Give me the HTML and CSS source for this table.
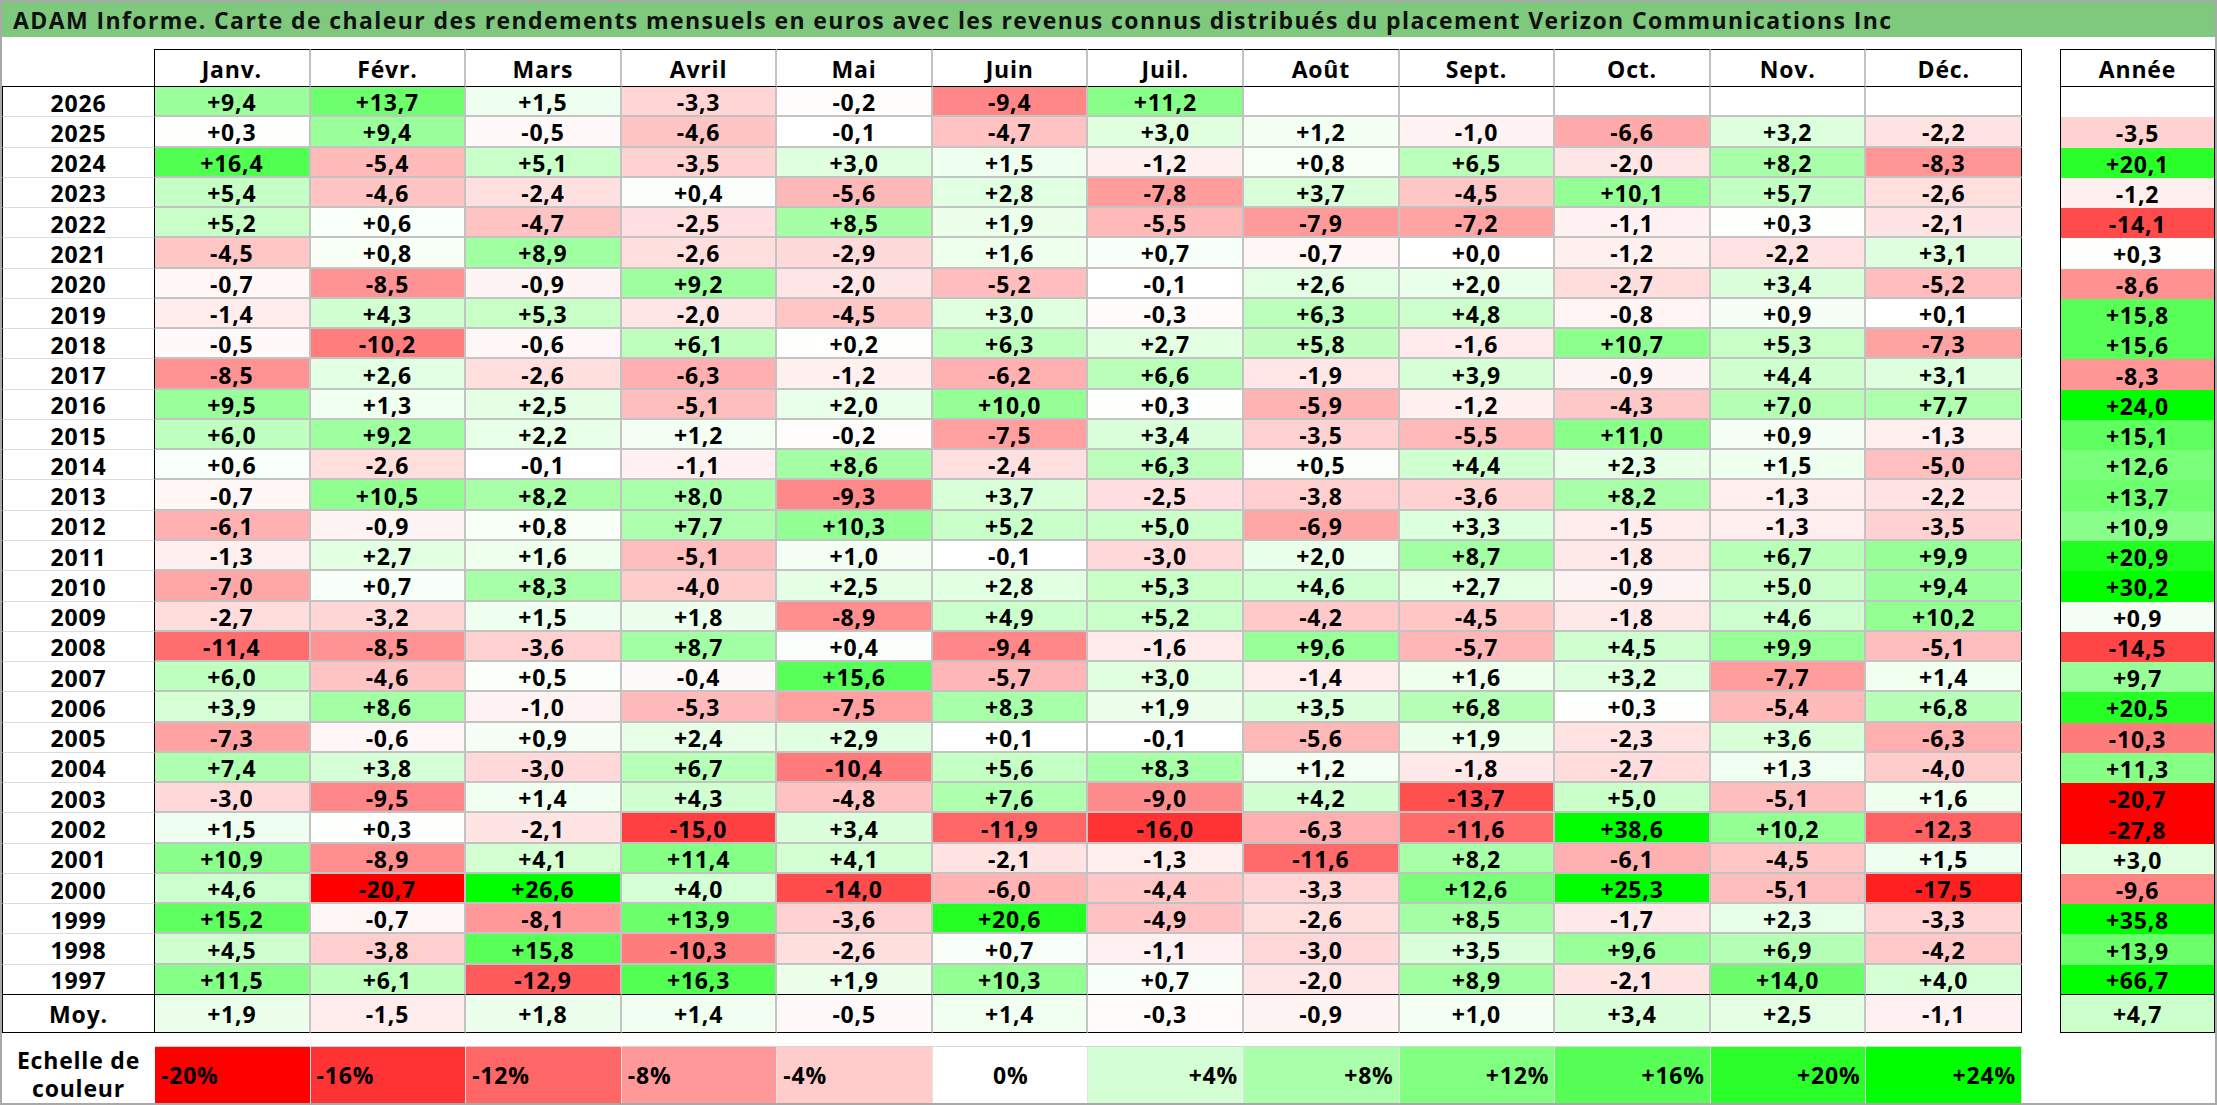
FILE: index.html
```html
<!DOCTYPE html>
<html lang="fr">
<head>
<meta charset="utf-8">
<title>Carte de chaleur Verizon</title>
<link rel="stylesheet" href="styles.css">
</head>
<body>
<div class="page">
  <div class="title">ADAM Informe. Carte de chaleur des rendements mensuels en euros avec les revenus connus distribués du placement Verizon Communications Inc</div>
  <div class="main">
    <div class="tables">
      <div class="heat">
        <div class="row head"><div class="cell corner"></div><div class="cell mh">Janv.</div><div class="cell mh">Févr.</div><div class="cell mh">Mars</div><div class="cell mh">Avril</div><div class="cell mh">Mai</div><div class="cell mh">Juin</div><div class="cell mh">Juil.</div><div class="cell mh">Août</div><div class="cell mh">Sept.</div><div class="cell mh">Oct.</div><div class="cell mh">Nov.</div><div class="cell mh">Déc.</div></div>
        <div class="row"><div class="cell yr">2026</div><div class="cell v">+9,4</div><div class="cell v">+13,7</div><div class="cell v">+1,5</div><div class="cell v">-3,3</div><div class="cell v">-0,2</div><div class="cell v">-9,4</div><div class="cell v">+11,2</div><div class="cell v"></div><div class="cell v"></div><div class="cell v"></div><div class="cell v"></div><div class="cell v"></div></div>
        <div class="row"><div class="cell yr">2025</div><div class="cell v">+0,3</div><div class="cell v">+9,4</div><div class="cell v">-0,5</div><div class="cell v">-4,6</div><div class="cell v">-0,1</div><div class="cell v">-4,7</div><div class="cell v">+3,0</div><div class="cell v">+1,2</div><div class="cell v">-1,0</div><div class="cell v">-6,6</div><div class="cell v">+3,2</div><div class="cell v">-2,2</div></div>
        <div class="row"><div class="cell yr">2024</div><div class="cell v">+16,4</div><div class="cell v">-5,4</div><div class="cell v">+5,1</div><div class="cell v">-3,5</div><div class="cell v">+3,0</div><div class="cell v">+1,5</div><div class="cell v">-1,2</div><div class="cell v">+0,8</div><div class="cell v">+6,5</div><div class="cell v">-2,0</div><div class="cell v">+8,2</div><div class="cell v">-8,3</div></div>
        <div class="row"><div class="cell yr">2023</div><div class="cell v">+5,4</div><div class="cell v">-4,6</div><div class="cell v">-2,4</div><div class="cell v">+0,4</div><div class="cell v">-5,6</div><div class="cell v">+2,8</div><div class="cell v">-7,8</div><div class="cell v">+3,7</div><div class="cell v">-4,5</div><div class="cell v">+10,1</div><div class="cell v">+5,7</div><div class="cell v">-2,6</div></div>
        <div class="row"><div class="cell yr">2022</div><div class="cell v">+5,2</div><div class="cell v">+0,6</div><div class="cell v">-4,7</div><div class="cell v">-2,5</div><div class="cell v">+8,5</div><div class="cell v">+1,9</div><div class="cell v">-5,5</div><div class="cell v">-7,9</div><div class="cell v">-7,2</div><div class="cell v">-1,1</div><div class="cell v">+0,3</div><div class="cell v">-2,1</div></div>
        <div class="row"><div class="cell yr">2021</div><div class="cell v">-4,5</div><div class="cell v">+0,8</div><div class="cell v">+8,9</div><div class="cell v">-2,6</div><div class="cell v">-2,9</div><div class="cell v">+1,6</div><div class="cell v">+0,7</div><div class="cell v">-0,7</div><div class="cell v">+0,0</div><div class="cell v">-1,2</div><div class="cell v">-2,2</div><div class="cell v">+3,1</div></div>
        <div class="row"><div class="cell yr">2020</div><div class="cell v">-0,7</div><div class="cell v">-8,5</div><div class="cell v">-0,9</div><div class="cell v">+9,2</div><div class="cell v">-2,0</div><div class="cell v">-5,2</div><div class="cell v">-0,1</div><div class="cell v">+2,6</div><div class="cell v">+2,0</div><div class="cell v">-2,7</div><div class="cell v">+3,4</div><div class="cell v">-5,2</div></div>
        <div class="row"><div class="cell yr">2019</div><div class="cell v">-1,4</div><div class="cell v">+4,3</div><div class="cell v">+5,3</div><div class="cell v">-2,0</div><div class="cell v">-4,5</div><div class="cell v">+3,0</div><div class="cell v">-0,3</div><div class="cell v">+6,3</div><div class="cell v">+4,8</div><div class="cell v">-0,8</div><div class="cell v">+0,9</div><div class="cell v">+0,1</div></div>
        <div class="row"><div class="cell yr">2018</div><div class="cell v">-0,5</div><div class="cell v">-10,2</div><div class="cell v">-0,6</div><div class="cell v">+6,1</div><div class="cell v">+0,2</div><div class="cell v">+6,3</div><div class="cell v">+2,7</div><div class="cell v">+5,8</div><div class="cell v">-1,6</div><div class="cell v">+10,7</div><div class="cell v">+5,3</div><div class="cell v">-7,3</div></div>
        <div class="row"><div class="cell yr">2017</div><div class="cell v">-8,5</div><div class="cell v">+2,6</div><div class="cell v">-2,6</div><div class="cell v">-6,3</div><div class="cell v">-1,2</div><div class="cell v">-6,2</div><div class="cell v">+6,6</div><div class="cell v">-1,9</div><div class="cell v">+3,9</div><div class="cell v">-0,9</div><div class="cell v">+4,4</div><div class="cell v">+3,1</div></div>
        <div class="row"><div class="cell yr">2016</div><div class="cell v">+9,5</div><div class="cell v">+1,3</div><div class="cell v">+2,5</div><div class="cell v">-5,1</div><div class="cell v">+2,0</div><div class="cell v">+10,0</div><div class="cell v">+0,3</div><div class="cell v">-5,9</div><div class="cell v">-1,2</div><div class="cell v">-4,3</div><div class="cell v">+7,0</div><div class="cell v">+7,7</div></div>
        <div class="row"><div class="cell yr">2015</div><div class="cell v">+6,0</div><div class="cell v">+9,2</div><div class="cell v">+2,2</div><div class="cell v">+1,2</div><div class="cell v">-0,2</div><div class="cell v">-7,5</div><div class="cell v">+3,4</div><div class="cell v">-3,5</div><div class="cell v">-5,5</div><div class="cell v">+11,0</div><div class="cell v">+0,9</div><div class="cell v">-1,3</div></div>
        <div class="row"><div class="cell yr">2014</div><div class="cell v">+0,6</div><div class="cell v">-2,6</div><div class="cell v">-0,1</div><div class="cell v">-1,1</div><div class="cell v">+8,6</div><div class="cell v">-2,4</div><div class="cell v">+6,3</div><div class="cell v">+0,5</div><div class="cell v">+4,4</div><div class="cell v">+2,3</div><div class="cell v">+1,5</div><div class="cell v">-5,0</div></div>
        <div class="row"><div class="cell yr">2013</div><div class="cell v">-0,7</div><div class="cell v">+10,5</div><div class="cell v">+8,2</div><div class="cell v">+8,0</div><div class="cell v">-9,3</div><div class="cell v">+3,7</div><div class="cell v">-2,5</div><div class="cell v">-3,8</div><div class="cell v">-3,6</div><div class="cell v">+8,2</div><div class="cell v">-1,3</div><div class="cell v">-2,2</div></div>
        <div class="row"><div class="cell yr">2012</div><div class="cell v">-6,1</div><div class="cell v">-0,9</div><div class="cell v">+0,8</div><div class="cell v">+7,7</div><div class="cell v">+10,3</div><div class="cell v">+5,2</div><div class="cell v">+5,0</div><div class="cell v">-6,9</div><div class="cell v">+3,3</div><div class="cell v">-1,5</div><div class="cell v">-1,3</div><div class="cell v">-3,5</div></div>
        <div class="row"><div class="cell yr">2011</div><div class="cell v">-1,3</div><div class="cell v">+2,7</div><div class="cell v">+1,6</div><div class="cell v">-5,1</div><div class="cell v">+1,0</div><div class="cell v">-0,1</div><div class="cell v">-3,0</div><div class="cell v">+2,0</div><div class="cell v">+8,7</div><div class="cell v">-1,8</div><div class="cell v">+6,7</div><div class="cell v">+9,9</div></div>
        <div class="row"><div class="cell yr">2010</div><div class="cell v">-7,0</div><div class="cell v">+0,7</div><div class="cell v">+8,3</div><div class="cell v">-4,0</div><div class="cell v">+2,5</div><div class="cell v">+2,8</div><div class="cell v">+5,3</div><div class="cell v">+4,6</div><div class="cell v">+2,7</div><div class="cell v">-0,9</div><div class="cell v">+5,0</div><div class="cell v">+9,4</div></div>
        <div class="row"><div class="cell yr">2009</div><div class="cell v">-2,7</div><div class="cell v">-3,2</div><div class="cell v">+1,5</div><div class="cell v">+1,8</div><div class="cell v">-8,9</div><div class="cell v">+4,9</div><div class="cell v">+5,2</div><div class="cell v">-4,2</div><div class="cell v">-4,5</div><div class="cell v">-1,8</div><div class="cell v">+4,6</div><div class="cell v">+10,2</div></div>
        <div class="row"><div class="cell yr">2008</div><div class="cell v">-11,4</div><div class="cell v">-8,5</div><div class="cell v">-3,6</div><div class="cell v">+8,7</div><div class="cell v">+0,4</div><div class="cell v">-9,4</div><div class="cell v">-1,6</div><div class="cell v">+9,6</div><div class="cell v">-5,7</div><div class="cell v">+4,5</div><div class="cell v">+9,9</div><div class="cell v">-5,1</div></div>
        <div class="row"><div class="cell yr">2007</div><div class="cell v">+6,0</div><div class="cell v">-4,6</div><div class="cell v">+0,5</div><div class="cell v">-0,4</div><div class="cell v">+15,6</div><div class="cell v">-5,7</div><div class="cell v">+3,0</div><div class="cell v">-1,4</div><div class="cell v">+1,6</div><div class="cell v">+3,2</div><div class="cell v">-7,7</div><div class="cell v">+1,4</div></div>
        <div class="row"><div class="cell yr">2006</div><div class="cell v">+3,9</div><div class="cell v">+8,6</div><div class="cell v">-1,0</div><div class="cell v">-5,3</div><div class="cell v">-7,5</div><div class="cell v">+8,3</div><div class="cell v">+1,9</div><div class="cell v">+3,5</div><div class="cell v">+6,8</div><div class="cell v">+0,3</div><div class="cell v">-5,4</div><div class="cell v">+6,8</div></div>
        <div class="row"><div class="cell yr">2005</div><div class="cell v">-7,3</div><div class="cell v">-0,6</div><div class="cell v">+0,9</div><div class="cell v">+2,4</div><div class="cell v">+2,9</div><div class="cell v">+0,1</div><div class="cell v">-0,1</div><div class="cell v">-5,6</div><div class="cell v">+1,9</div><div class="cell v">-2,3</div><div class="cell v">+3,6</div><div class="cell v">-6,3</div></div>
        <div class="row"><div class="cell yr">2004</div><div class="cell v">+7,4</div><div class="cell v">+3,8</div><div class="cell v">-3,0</div><div class="cell v">+6,7</div><div class="cell v">-10,4</div><div class="cell v">+5,6</div><div class="cell v">+8,3</div><div class="cell v">+1,2</div><div class="cell v">-1,8</div><div class="cell v">-2,7</div><div class="cell v">+1,3</div><div class="cell v">-4,0</div></div>
        <div class="row"><div class="cell yr">2003</div><div class="cell v">-3,0</div><div class="cell v">-9,5</div><div class="cell v">+1,4</div><div class="cell v">+4,3</div><div class="cell v">-4,8</div><div class="cell v">+7,6</div><div class="cell v">-9,0</div><div class="cell v">+4,2</div><div class="cell v">-13,7</div><div class="cell v">+5,0</div><div class="cell v">-5,1</div><div class="cell v">+1,6</div></div>
        <div class="row"><div class="cell yr">2002</div><div class="cell v">+1,5</div><div class="cell v">+0,3</div><div class="cell v">-2,1</div><div class="cell v">-15,0</div><div class="cell v">+3,4</div><div class="cell v">-11,9</div><div class="cell v">-16,0</div><div class="cell v">-6,3</div><div class="cell v">-11,6</div><div class="cell v">+38,6</div><div class="cell v">+10,2</div><div class="cell v">-12,3</div></div>
        <div class="row"><div class="cell yr">2001</div><div class="cell v">+10,9</div><div class="cell v">-8,9</div><div class="cell v">+4,1</div><div class="cell v">+11,4</div><div class="cell v">+4,1</div><div class="cell v">-2,1</div><div class="cell v">-1,3</div><div class="cell v">-11,6</div><div class="cell v">+8,2</div><div class="cell v">-6,1</div><div class="cell v">-4,5</div><div class="cell v">+1,5</div></div>
        <div class="row"><div class="cell yr">2000</div><div class="cell v">+4,6</div><div class="cell v">-20,7</div><div class="cell v">+26,6</div><div class="cell v">+4,0</div><div class="cell v">-14,0</div><div class="cell v">-6,0</div><div class="cell v">-4,4</div><div class="cell v">-3,3</div><div class="cell v">+12,6</div><div class="cell v">+25,3</div><div class="cell v">-5,1</div><div class="cell v">-17,5</div></div>
        <div class="row"><div class="cell yr">1999</div><div class="cell v">+15,2</div><div class="cell v">-0,7</div><div class="cell v">-8,1</div><div class="cell v">+13,9</div><div class="cell v">-3,6</div><div class="cell v">+20,6</div><div class="cell v">-4,9</div><div class="cell v">-2,6</div><div class="cell v">+8,5</div><div class="cell v">-1,7</div><div class="cell v">+2,3</div><div class="cell v">-3,3</div></div>
        <div class="row"><div class="cell yr">1998</div><div class="cell v">+4,5</div><div class="cell v">-3,8</div><div class="cell v">+15,8</div><div class="cell v">-10,3</div><div class="cell v">-2,6</div><div class="cell v">+0,7</div><div class="cell v">-1,1</div><div class="cell v">-3,0</div><div class="cell v">+3,5</div><div class="cell v">+9,6</div><div class="cell v">+6,9</div><div class="cell v">-4,2</div></div>
        <div class="row last"><div class="cell yr">1997</div><div class="cell v">+11,5</div><div class="cell v">+6,1</div><div class="cell v">-12,9</div><div class="cell v">+16,3</div><div class="cell v">+1,9</div><div class="cell v">+10,3</div><div class="cell v">+0,7</div><div class="cell v">-2,0</div><div class="cell v">+8,9</div><div class="cell v">-2,1</div><div class="cell v">+14,0</div><div class="cell v">+4,0</div></div>
        <div class="row moy"><div class="cell yr">Moy.</div><div class="cell v">+1,9</div><div class="cell v">-1,5</div><div class="cell v">+1,8</div><div class="cell v">+1,4</div><div class="cell v">-0,5</div><div class="cell v">+1,4</div><div class="cell v">-0,3</div><div class="cell v">-0,9</div><div class="cell v">+1,0</div><div class="cell v">+3,4</div><div class="cell v">+2,5</div><div class="cell v">-1,1</div></div>
      </div>
      <div class="annual">
        <div class="cell ah">Année</div>
        <div class="cell a v"></div>
        <div class="cell a v">-3,5</div>
        <div class="cell a v">+20,1</div>
        <div class="cell a v">-1,2</div>
        <div class="cell a v">-14,1</div>
        <div class="cell a v">+0,3</div>
        <div class="cell a v">-8,6</div>
        <div class="cell a v">+15,8</div>
        <div class="cell a v">+15,6</div>
        <div class="cell a v">-8,3</div>
        <div class="cell a v">+24,0</div>
        <div class="cell a v">+15,1</div>
        <div class="cell a v">+12,6</div>
        <div class="cell a v">+13,7</div>
        <div class="cell a v">+10,9</div>
        <div class="cell a v">+20,9</div>
        <div class="cell a v">+30,2</div>
        <div class="cell a v">+0,9</div>
        <div class="cell a v">-14,5</div>
        <div class="cell a v">+9,7</div>
        <div class="cell a v">+20,5</div>
        <div class="cell a v">-10,3</div>
        <div class="cell a v">+11,3</div>
        <div class="cell a v">-20,7</div>
        <div class="cell a v">-27,8</div>
        <div class="cell a v">+3,0</div>
        <div class="cell a v">-9,6</div>
        <div class="cell a v">+35,8</div>
        <div class="cell a v">+13,9</div>
        <div class="cell a v a-last">+66,7</div>
        <div class="cell a v a-moy">+4,7</div>
      </div>
    </div>
    <div class="scale">
      <div class="cell sl"><span class="sl-line">Echelle de</span><span class="sl-line">couleur</span></div>
      <div class="cell sc neg s-20">-20%</div>
      <div class="cell sc neg s-16">-16%</div>
      <div class="cell sc neg s-12">-12%</div>
      <div class="cell sc neg s-8">-8%</div>
      <div class="cell sc neg s-4">-4%</div>
      <div class="cell sc zero">0%</div>
      <div class="cell sc pos s4">+4%</div>
      <div class="cell sc pos s8">+8%</div>
      <div class="cell sc pos s12">+12%</div>
      <div class="cell sc pos s16">+16%</div>
      <div class="cell sc pos s20">+20%</div>
      <div class="cell sc pos s24">+24%</div>
    </div>
  </div>
</div>
<script src="script.js"></script>
</body>
</html>
```

FILE: styles.css
```css
* { box-sizing: border-box; }

body {
  margin: 0;
  background: #ffffff;
  font-family: "Open Sans", "Liberation Sans", sans-serif;
  color: #000000;
}

.page {
  width: 2217px;
  height: 1105px;
  border: 2px solid #a9a9a9;
  display: flex;
  flex-direction: column;
  overflow: hidden;
}

.title {
  height: 35px;
  flex: none;
  background: #7fc97f;
  padding: 1px 0 0 11px;
  font-size: 23px;
  font-weight: 700;
  letter-spacing: 1.4px;
  line-height: 34px;
  white-space: nowrap;
  color: #111111;
}

.main {
  padding-top: 12px;
}

.tables {
  display: flex;
  gap: 38px;
}

.heat {
  width: 2020px;
  display: grid;
  grid-template-columns: 153px repeat(12, 1fr);
  grid-template-rows: 38px repeat(30, 30.27px) 38px;
}

.annual {
  width: 155px;
  display: grid;
  grid-template-columns: 1fr;
  grid-template-rows: 38px repeat(30, 30.27px) 38px;
}

.row { display: contents; }

.cell {
  display: flex;
  align-items: center;
  justify-content: center;
  font-size: 23px;
  font-weight: 700;
  letter-spacing: 0.8px;
  padding-top: 2px;
  background: #ffffff;
  white-space: nowrap;
}

.corner {
  border-right: 1px solid #000000;
  border-bottom: 1px solid #000000;
}

.mh {
  border-top: 1px solid #000000;
  border-bottom: 1px solid #000000;
  border-right: 2px solid #c3c3c3;
}

.head > .mh:last-child { border-right: 1px solid #000000; }

.yr {
  border-left: 1px solid #000000;
  border-right: 1px solid #000000;
  border-bottom: 1px solid #dcdcdc;
}

.heat .v {
  border-right: 2px solid #c3c3c3;
  border-bottom: 2px solid #c3c3c3;
}

.heat .row > .v:last-child { border-right: 1px solid #000000; }

.heat .row.last > .cell,
.heat .row.moy > .cell { border-bottom: 1px solid #000000; }

.ah {
  border: 1px solid #000000;
}

.a {
  border-left: 1px solid #000000;
  border-right: 1px solid #000000;
}

.a-last, .a-moy { border-bottom: 1px solid #000000; }

.scale {
  width: 2020px;
  height: 57px;
  margin-top: 13px;
  display: grid;
  grid-template-columns: 153px repeat(12, 1fr);
}

.sl {
  flex-direction: column;
  gap: 0;
  padding: 0;
}

.sl-line {
  display: block;
  line-height: 28px;
  height: 28px;
}

.sc {
  border-top: 1px solid #d6d6d6;
  border-right: 1px solid #e2e2e2;
  padding: 0 5px 0 6px;
}

.neg { justify-content: flex-start; }
.zero { justify-content: center; }
.pos { justify-content: flex-end; }

.s-20 { background: #ff0000; }
.s-16 { background: #ff3333; }
.s-12 { background: #ff6666; }
.s-8 { background: #ff9999; }
.s-4 { background: #ffcccc; }
.s4 { background: #d4ffd4; }
.s8 { background: #aaffaa; }
.s12 { background: #80ff80; }
.s16 { background: #55ff55; }
.s20 { background: #2aff2a; }
.s24 { background: #00ff00; }
```

FILE: script.js
```js
document.querySelectorAll('.v').forEach(function (el) {
  var v = parseFloat(el.textContent.replace(',', '.'));
  if (isNaN(v)) return;
  var r = 255, g = 255, b = 255, c;
  if (v > 0) {
    c = Math.round(255 * (1 - Math.min(v / 24, 1)));
    r = c; b = c;
  } else if (v < 0) {
    c = Math.round(255 * (1 - Math.min(-v / 20, 1)));
    g = c; b = c;
  }
  el.style.backgroundColor = 'rgb(' + r + ',' + g + ',' + b + ')';
});
```
